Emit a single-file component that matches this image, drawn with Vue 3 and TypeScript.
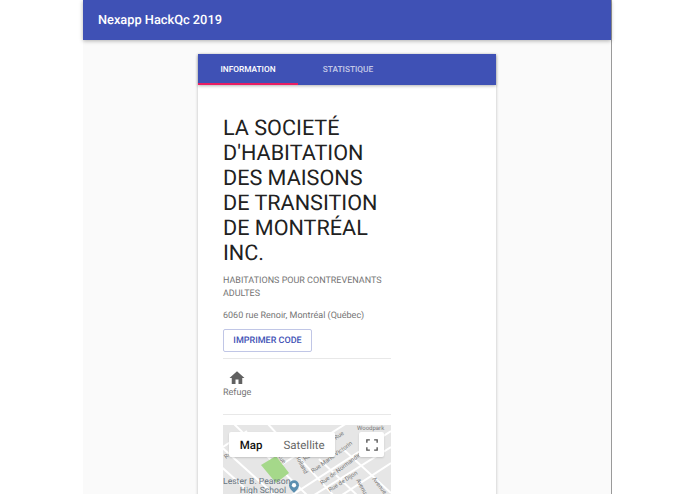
<script setup lang="ts">
const roads: string[] = [
  'M66 72 L168 6', 'M88 72 L168 22', 'M116 72 L168 38', 'M58 40 L124 -2',
  'M-6 18 L54 72', 'M-6 38 L32 72', 'M10 -2 L86 72', 'M44 -2 L112 72', 'M96 34 L136 72', 'M120 24 L168 68', 'M24 6 L0 22',
];
const streets = [
  { t: 'Rue Marie-Victorin', x: 90, y: 48, a: -36 },
  { t: 'Rue de Normandie', x: 99, y: 60, a: -37 },
  { t: 'Rue de Dijon', x: 107, y: 67, a: -33 },
  { t: 'Holland', x: 72, y: 31, a: 62 },
  { t: 'Rue', x: 3, y: 34, a: -38 },
  { t: 'Rue', x: 54, y: 31, a: 52 },
  { t: 'Rue', x: 82, y: 36, a: -36 },
  { t: 'Rue', x: 113, y: 15, a: -36 },
  { t: 'Avenue', x: 133, y: 55, a: 62 },
  { t: 'Avenue', x: 149, y: 54, a: 52 },
  { t: 'Woodpark', x: 134, y: 5, a: 0 },
];
</script>

<template>
  <div class="page">
    <div class="app">
      <header class="toolbar">Nexapp HackQc 2019</header>
      <main class="content">
        <section class="card">
          <nav class="tabs">
            <div class="tab active">INFORMATION</div>
            <div class="tab">STATISTIQUE</div>
          </nav>
          <div class="body">
            <div class="inner">
              <h1 class="title">LA SOCIETÉ D'HABITATION DES MAISONS DE TRANSITION DE MONTRÉAL INC.</h1>
              <p class="sub">HABITATIONS POUR CONTREVENANTS ADULTES</p>
              <p class="addr">6060 rue Renoir, Montréal (Québec)</p>
              <button class="btn" type="button">IMPRIMER CODE</button>
              <hr class="rule first" />
              <div class="kind">
                <svg class="home" viewBox="0 0 24 24" width="18" height="18">
                  <path fill="#616161" d="M10 20v-6h4v6h5v-8h3L12 3 2 12h3v8z" />
                </svg>
                <span>Refuge</span>
              </div>
              <hr class="rule second" />
              <div class="map">
                <svg class="map-art" viewBox="0 0 168 69" width="168" height="69">
                  <rect width="168" height="69" fill="#e6e6e6" />
                  <path v-for="d in roads" :key="d" :d="d" stroke="#fff" stroke-width="2" fill="none" />
                  <path d="M38 40 L53 31 L66 48 L53 58 Z" fill="#a5d88a" />
                  <text v-for="s in streets" :key="s.t + s.x" :transform="`translate(${s.x} ${s.y}) rotate(${s.a})`" class="street">{{ s.t }}</text>
                </svg>
                <div class="school">Lester B. Pearson<br />High School</div>
                <svg class="pin" viewBox="0 0 12 15" width="10" height="13">
                  <path fill="#5b8fb0" d="M6 0a6 6 0 0 1 6 6c0 3.500-3 6.500-6 9-3-2.500-6-5.500-6-9a6 6 0 0 1 6-6z" />
                  <circle cx="6" cy="6" r="2.600" fill="#fff" />
                </svg>
                <div class="switch">
                  <span class="map-btn on">Map</span>
                  <span class="map-btn">Satellite</span>
                </div>
                <div class="full">
                  <svg viewBox="0 0 14 14" width="12" height="12">
                    <path fill="none" stroke="#555" stroke-width="1.6" d="M1 4.500V1h3.500M9.500 1H13v3.500M13 9.500V13H9.500M4.500 13H1V9.500" />
                  </svg>
                </div>
              </div>
            </div>
          </div>
        </section>
      </main>
    </div>
  </div>
</template>

<style>
html, body { margin: 0; background: #fff; overflow: hidden; }
</style>

<style scoped>
.page { width: 695px; height: 494px; overflow: hidden; background: #fff; font-family: Roboto, "Liberation Sans", sans-serif; text-rendering: geometricPrecision; }
.app { width: 528px; height: 494px; margin-left: 83px; background: #fafafa; border-right: 1px solid #9a9a9a; display: flex; flex-direction: column; position: relative; }
.toolbar { height: 40px; flex: none; box-sizing: border-box; padding: 0 15px; display: flex; align-items: center; background: #3f51b5; color: #fff; font-size: 12.800px; font-weight: 500; box-shadow: 0 1px 4px rgba(0,0,0,.3); position: relative; z-index: 1; }
.content { flex: 1; min-height: 0; padding-top: 14px; padding-left: 115px; }
.card { width: 298px; height: 470px; background: #fff; box-shadow: 0 1px 3px rgba(0,0,0,.25); }
.tabs { height: 31px; box-sizing: border-box; background: #3f51b5; display: flex; box-shadow: 0 1px 3px rgba(0,0,0,.3); position: relative; }
.tab { width: 100px; display: flex; align-items: center; justify-content: center; font-size: 8.300px; font-weight: 500; color: rgba(255,255,255,.7); box-sizing: border-box; }
.tab.active { color: #fff; border-bottom: 2px solid #e91e63; padding-top: 2px; }
.body { padding: 31px 25px 0; }
.inner { width: 168px; }
.title { margin: 0; padding-right: 6px; font-size: 21.600px; line-height: 25px; font-weight: 400; color: #212121; }
.sub { margin: 9px 0 0; font-size: 9px; line-height: 13px; color: #757575; }
.addr { margin: 9px 0 0; font-size: 9px; line-height: 13px; color: #757575; }
.btn { display: block; margin: 6px 0 0; width: 89px; height: 23px; padding: 0; background: #fff; border: 1px solid #c0c6e6; border-radius: 2px; color: #3f51b5; font: 500 9px Roboto, "Liberation Sans", sans-serif; text-rendering: geometricPrecision; }
.rule { margin: 0; border: 0; height: 1px; background: #e8e8e8; }
.first { margin-top: 6px; }
.kind { display: inline-flex; flex-direction: column; align-items: center; margin-top: 10px; font-size: 9px; line-height: 13px; color: #757575; }
.home { display: block; }
.second { margin-top: 14px; }
.map { position: relative; width: 168px; height: 69px; margin-top: 10px; overflow: hidden; }
.map-art { display: block; }
.street { font-size: 6px; fill: #777; font-family: Roboto, "Liberation Sans", sans-serif; }
.school { position: absolute; left: 0; width: 63px; top: 53px; text-align: right; font-size: 8.600px; line-height: 8.500px; color: #66747f; white-space: nowrap; }
.pin { position: absolute; left: 66px; top: 55px; }
.switch { position: absolute; left: 6px; top: 7px; width: 106px; height: 25px; display: flex; background: #fff; border-radius: 2px; box-shadow: 0 1px 2px rgba(0,0,0,.15); }
.map-btn { flex: 1; display: flex; align-items: center; justify-content: center; font-size: 11.500px; color: #666; }
.map-btn.on { flex: none; width: 44px; color: #111; font-weight: 500; }
.full { position: absolute; left: 136px; top: 7px; width: 25px; height: 25px; background: #fff; border-radius: 2px; display: flex; align-items: center; justify-content: center; box-shadow: 0 1px 2px rgba(0,0,0,.15); }
</style>
